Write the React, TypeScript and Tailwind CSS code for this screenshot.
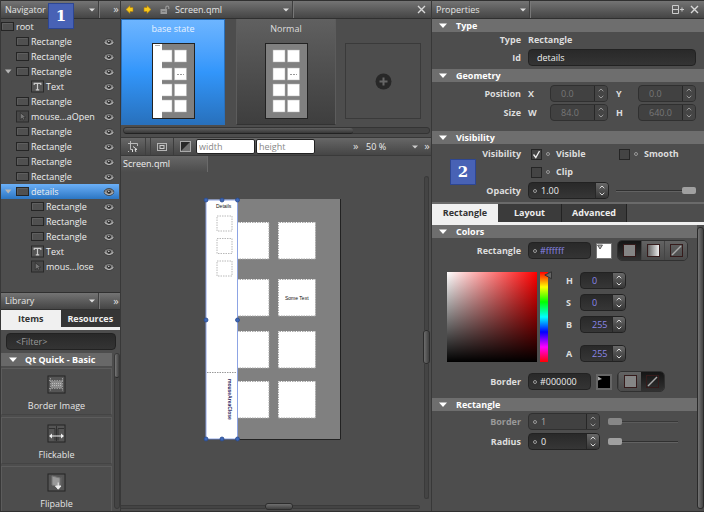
import React from "react";

const uiFont = "font-['Open_Sans','Noto_Sans',sans-serif]";
const bar = "bg-gradient-to-b from-[#747474] to-[#454545] border-t border-[#303030] border-b";
const field = "rounded-[4px] border border-[#222] bg-gradient-to-b from-[#292929] to-[#343434]";

function Down({ className = "" }: { className?: string }) {
  return (
    <svg aria-hidden="true" width="10" height="6" viewBox="0 0 10 6" className={className}>
      <path d="M1 0.5h8L5 5z" fill="currentColor" />
    </svg>
  );
}

function PaneSelect({ label, className }: { label: string; className: string }) {
  return (
    <div className={`grid h-full items-center border-r border-[#777] shadow-[-1px_0_0_#3f3f3f_inset] ${className}`}>
      <select aria-label={`${label} pane`} className="col-start-1 row-start-1 w-full appearance-none bg-transparent pl-1 text-[9px] text-[#e4e4e4] outline-none">
        <option>{label}</option>
      </select>
      <svg aria-hidden="true" width="6" height="4" viewBox="0 0 6 4" className="pointer-events-none col-start-1 row-start-1 mr-1 justify-self-end text-[#ddd]">
        <path d="M0 0.5h6L3 3.5z" fill="currentColor" />
      </svg>
    </div>
  );
}

function Eye() {
  return (
    <svg aria-hidden="true" width="12" height="10" viewBox="0 0 12 10">
      <ellipse cx="6" cy="5" rx="4.800" ry="3.400" fill="#858585" stroke="#303030" strokeWidth="0.800" />
      <path d="M1.5 5.3Q6 9.500 10.5 5.3" fill="none" stroke="#c4c4c4" strokeWidth="1" />
      <circle cx="6" cy="4.8" r="1.9" fill="#242424" />
      <circle cx="5.8" cy="4.4" r="0.8" fill="#c8c8c8" />
    </svg>
  );
}

function NodeIcon({ kind }: { kind: string }) {
  if (kind === "rect")
    return (
      <svg aria-hidden="true" width="13" height="11" viewBox="0 0 13 11">
        <rect x="0.5" y="1.5" width="12" height="8" fill="#505050" stroke="#252525" />
        <path d="M1.5 8.5v-6h10" stroke="#5f5f5f" fill="none" />
      </svg>
    );
  return (
    <svg aria-hidden="true" width="13" height="13" viewBox="0 0 13 13">
      <rect x="0.5" y="1" width="12" height="11" fill={kind === "text" ? "#555" : "#484848"} stroke="#2a2a2a" />
      {kind === "text" ? (
        <path d="M3.2 5V3.3h6.6V5M6.5 3.3v6.5M4.8 9.9h3.4" stroke="#ccc" strokeWidth="1.2" fill="none" />
      ) : (
        <path d="M4.3 2.7v7l2-1.6 1 2 1.4-.7-1-2 2-.3z" fill="#777" stroke="#242424" strokeWidth="0.6" />
      )}
    </svg>
  );
}

type Node = { name: string; kind: string; depth: number; open?: boolean; selected?: boolean };
const nodes: Node[] = [
  { name: "root", kind: "rect", depth: 0 },
  { name: "Rectangle", kind: "rect", depth: 1 },
  { name: "Rectangle", kind: "rect", depth: 1 },
  { name: "Rectangle", kind: "rect", depth: 1, open: true },
  { name: "Text", kind: "text", depth: 2 },
  { name: "Rectangle", kind: "rect", depth: 1 },
  { name: "mouse...aOpen", kind: "mouse", depth: 1 },
  { name: "Rectangle", kind: "rect", depth: 1 },
  { name: "Rectangle", kind: "rect", depth: 1 },
  { name: "Rectangle", kind: "rect", depth: 1 },
  { name: "Rectangle", kind: "rect", depth: 1 },
  { name: "details", kind: "rect", depth: 1, open: true, selected: true },
  { name: "Rectangle", kind: "rect", depth: 2 },
  { name: "Rectangle", kind: "rect", depth: 2 },
  { name: "Rectangle", kind: "rect", depth: 2 },
  { name: "Text", kind: "text", depth: 2 },
  { name: "mous...lose", kind: "mouse", depth: 2 },
];
const indents = ["pl-0", "pl-[3px]", "pl-[30px]"];

function Navigator() {
  return (
    <section className="relative flex h-[292px] shrink-0 flex-col">
      <header className={`flex h-[19px] items-center ${bar}`}>
        <PaneSelect label="Navigator" className="flex-1" />
        <button aria-label="More navigator options" className="w-5 pb-[2px] pl-3 text-[11px] leading-none text-[#ddd]">»</button>
      </header>
      <ul className="pr-px">
        {nodes.map((n, i) => (
          <li key={i} className={`flex h-[15px] items-center ${indents[n.depth]} ${n.selected ? "bg-gradient-to-b from-[#6bb0f8] to-[#2b76c3]" : ""}`}>
            {n.depth === 1 && (
              <span className="flex w-3 text-[#b5b5b5]">
                {n.open && <svg aria-hidden="true" width="8" height="5" viewBox="0 0 8 5"><path d="M1 .5h6.5L4.2 4.5z" fill="currentColor" /></svg>}
              </span>
            )}
            <NodeIcon kind={n.kind} />
            <span className="ml-[2px] flex-1 whitespace-nowrap text-[9px] leading-[15px] text-[#eee]">{n.name}</span>
            {n.depth > 0 && <button aria-label={`Toggle ${n.name}`} className="mr-[4px]"><Eye /></button>}
          </li>
        ))}
      </ul>
      <span className="absolute left-[47px] top-[3px] flex size-[26px] items-center justify-center border border-[#2d4692] bg-[#4862b5] font-['DejaVu_Serif',serif] text-[15px] font-bold text-white">1</span>
    </section>
  );
}

function LibIcon({ kind }: { kind: string }) {
  return (
    <svg aria-hidden="true" width="19" height="19" viewBox="0 0 19 19">
      <rect x="1" y="1" width="17" height="17" fill="#555" stroke="#242424" />
      {kind === "Border Image" && (
        <g>
          <rect x="4" y="6" width="11" height="7" fill="#8a8a8a" />
          <path d="M2 5.5h15M2 13.5h15M3.5 3v13M15.5 3v13" stroke="#999" strokeDasharray="1.5 1" fill="none" />
          <path d="M5 8.5h9M5 10.5h9" stroke="#bbb" strokeDasharray="1 1" />
        </g>
      )}
      {kind === "Flickable" && (
        <g>
          <path d="M2 4.5h6v12M17 4.5h-6v12M9.5 2v15" stroke="#303030" fill="none" />
          <path d="M3 12h13" stroke="#eee" />
          <path d="M2 12l3-2.5v5zM17 12l-3-2.5v5z" fill="#eee" />
        </g>
      )}
      {kind === "Flipable" && (
        <g>
          <path d="M5 3l8 2v9l-8-2z" fill="#999" stroke="#777" />
          <path d="M13 5l1.5-1v8L13 14z" fill="#666" />
          <path d="M11.2 9.5v4M8.5 13h5.5l-2.8 3.2z" stroke="#eee" strokeWidth="1" fill="#eee" />
        </g>
      )}
    </svg>
  );
}

function Library() {
  return (
    <section className="flex min-h-0 flex-1 flex-col">
      <header className={`flex h-[18px] shrink-0 items-center ${bar}`}>
        <PaneSelect label="Library" className="flex-1" />
        <button aria-label="More library options" className="w-5 pb-[2px] pl-3 text-[11px] leading-none text-[#ddd]">»</button>
      </header>
      <div role="tablist" className="flex h-5 shrink-0 border-b-[3px] border-[#f0f0f0] text-[9px] font-bold">
        <button role="tab" aria-selected="true" className="flex-1 bg-[#f0f0f0] text-[#333]">Items</button>
        <button role="tab" aria-selected="false" className="flex-1 bg-[#353535] text-[#eee]">Resources</button>
      </div>
      <input aria-label="Filter" placeholder="<Filter>" className={`ml-[5px] mr-[4px] my-[3px] h-[17px] shrink-0 px-[9px] text-[9px] text-white outline-none placeholder:text-[#999] ${field}`} />
      <div className="flex min-h-0 flex-1">
        <div className="min-w-0 flex-1 overflow-hidden">
          <button className="flex h-[13px] w-full items-center gap-[7px] bg-[#686868] pl-[7px] text-[9px] font-bold leading-[13px] text-white"><Down />Qt Quick - Basic</button>
          {["Border Image", "Flickable", "Flipable"].map((n) => (
            <button key={n} className="mt-[2px] flex h-[47px] w-full flex-col items-center border border-[#5c5c5c] border-b-[#444] pt-[6px] text-[9px] leading-[14px] text-[#e4e4e4]">
              <LibIcon kind={n} />
              <span className="mt-[5px]">{n}</span>
            </button>
          ))}
        </div>
        <div className="mb-[2px] ml-[2px] w-[6px] rounded-[3px] border border-[#383838] bg-[#444]">
          <div className="h-[24px] rounded-[2px] border-b border-[#292929] bg-gradient-to-r from-[#777] to-[#3e3e3e]" />
        </div>
      </div>
    </section>
  );
}

function Thumb({ base }: { base?: boolean }) {
  return (
    <svg aria-hidden="true" width="43" height="76" viewBox="0 0 43 76">
      <rect x="0.5" y="0.5" width="42" height="75" fill="#808080" stroke="#222" />
      {[7, 25, 41, 57].map((y) => (
        <g key={y} fill="#fff" stroke="#b0b0b0" strokeWidth="0.5">
          <rect x="8" y={y} width="12" height="12" />
          <rect x="22.5" y={y} width="12" height="12" />
        </g>
      ))}
      <path d="M25 31.5h7" stroke="#999" strokeDasharray="2 1" />
      {base && <rect x="1" y="1" width="9" height="74" fill="#fff" />}
      {base && <path d="M3 2.5h5" stroke="#aaa" />}
    </svg>
  );
}

function States() {
  return (
    <section className="flex h-[119px] shrink-0 flex-col border-b border-[#383838]">
      <div className="flex h-[106px]">
        <button className="flex w-[104px] flex-col items-center border border-[#2a70bb] bg-gradient-to-b from-[#6db5ff] via-[#3296fb] to-[#2871bd] pt-[2px] text-[9px] text-[#e8f2ff]">
          <span className="mb-[7px] leading-[14px]">base state</span>
          <Thumb base />
        </button>
        <button className="ml-[11px] flex w-[100px] flex-col items-center border-x border-[#5c5c5c] border-b border-b-[#333] bg-gradient-to-b from-[#606060] to-[#3e3e3e] pt-[3px] text-[9px] text-[#ddd]">
          <span className="mb-[7px] leading-[14px]">Normal</span>
          <Thumb />
        </button>
        <button aria-label="Add state" className="ml-[9px] mt-[24px] flex size-[76px] items-center justify-center border border-[#3a3a3a] bg-[#4d4d4d]">
          <svg aria-hidden="true" width="17" height="17" viewBox="0 0 17 17">
            <circle cx="8.5" cy="8.5" r="8" fill="#282828" />
            <path d="M8.5 4.5v8M4.5 8.5h8" stroke="#666" strokeWidth="2" />
          </svg>
        </button>
      </div>
      <div className="ml-[2px] mr-px mt-[2px] h-[7px] rounded-[3px] border border-[#343434] bg-[#444]">
        <div className="h-[6px] w-3/4 rounded-[3px] border-b border-[#222] bg-gradient-to-b from-[#606060] to-[#383838]" />
      </div>
    </section>
  );
}

function DocHeader() {
  return (
    <header className={`flex h-[19px] shrink-0 items-center ${bar}`}>
      <button aria-label="Back" className="ml-[5px]">
        <svg width="8" height="9" viewBox="0 0 8 9"><path d="M0 4.5L4 .5v2h3v4H4v2z" fill="#f7c91c" stroke="#b07c0a" strokeWidth="0.6" /></svg>
      </button>
      <button aria-label="Forward" className="ml-[9px]">
        <svg width="8" height="9" viewBox="0 0 8 9"><path d="M8 4.5L4 .5v2H1v4h3v2z" fill="#f7c91c" stroke="#b07c0a" strokeWidth="0.6" /></svg>
      </button>
      <button aria-label="Lock" className="ml-[9px]">
        <svg width="10" height="10" viewBox="0 0 10 10"><rect x="0.500" y="4" width="6.500" height="5" fill="#999" /><path d="M5.800 5V2.7a1.4 1.4 0 0 1 3 0V4" stroke="#999" fill="none" strokeWidth="1.2" /><path d="M2 6.5h3.500" stroke="#777" /></svg>
      </button>
      <PaneSelect label="Screen.qml" className="ml-[1px] w-[123px]" />
      <span className="flex-1" />
      <CloseButton label="Close document" />
    </header>
  );
}

function CloseButton({ label }: { label: string }) {
  return (
    <button aria-label={label} className="mr-[5px]">
      <svg width="9" height="9" viewBox="0 0 9 9"><path d="M1 1l7 7M8 1L1 8" stroke="#d8d8d8" strokeWidth="1.4" /></svg>
    </button>
  );
}

function Toolbar() {
  const size = "h-[15px] w-[59px] rounded-[2px] border border-[#222] bg-white px-[2px] text-[9px] text-[#333] outline-none placeholder:text-[#888]";
  return (
    <div className="flex h-[17px] shrink-0 items-center bg-gradient-to-b from-[#676767] to-[#454545]">
      <button aria-label="Snapping" className="flex h-full w-[25px] items-center justify-center border-r border-[#404040]">
        <svg width="12" height="12" viewBox="0 0 12 12"><path d="M3.5 0v8.5H6M1 2.5h9.5V5M1 10.5h1" stroke="#bbb" fill="none" /><path d="M6 5.500l4 3H8l1 2.500M5.500 9v2" stroke="#ddd" fill="none" /></svg>
      </button>
      <span className="h-full w-[5px] border-r border-[#404040]" />
      <button aria-label="Show boundaries" className="flex h-full w-[22px] items-center justify-center">
        <svg width="10" height="10" viewBox="0 0 10 10"><rect x="0.5" y="1.500" width="9" height="7" fill="none" stroke="#b5b5b5" /><rect x="3" y="3.500" width="4" height="3" fill="#555" stroke="#ccc" /></svg>
      </button>
      <button aria-label="Show contrast" className="flex h-full w-[23px] items-center justify-center border-l border-[#3c3c3c]">
        <svg width="11" height="11" viewBox="0 0 11 11"><rect x="0.5" y="0.5" width="10" height="10" fill="#282828" stroke="#aaa" /><path d="M10 1v9H1z" fill="#707070" /></svg>
      </button>
      <input aria-label="Width" placeholder="width" className={size} />
      <input aria-label="Height" placeholder="height" className={`ml-px ${size}`} />
      <span className="flex-1" />
      <button aria-label="More tools" className="w-[13px] pb-[2px] text-left text-[11px] leading-none text-[#ddd]">»</button>
      <div className="grid w-[57px] items-center">
        <select aria-label="Zoom" className="col-start-1 row-start-1 w-full appearance-none bg-transparent text-[9px] text-[#eee] outline-none"><option>50 %</option></select>
        <svg aria-hidden="true" width="6" height="4" viewBox="0 0 6 4" className="pointer-events-none col-start-1 row-start-1 mr-[5px] justify-self-end text-[#ccc]"><path d="M0 .5h6L3 3.500z" fill="currentColor" /></svg>
      </div>
      <button aria-label="More zoom options" className="w-2 pb-[2px] text-[11px] leading-none text-[#ddd]">»</button>
    </div>
  );
}

function Artboard() {
  return (
    <svg role="img" aria-label="Screen design" width="142" height="247" viewBox="-3 -3 142 247" fontFamily="'Liberation Sans', sans-serif">
      <rect x="0" y="0" width="135" height="241" fill="#808080" />
      <path d="M0 240.500h134.500V0" stroke="#222" fill="none" />
      {[23, 80, 132, 182].map((y) => (
        <g key={y}>
          <path d={`M26 ${y}h37v37H26zM72 ${y}h37.500v37H72z`} fill="#fff" />
          <path d={`M31 ${y + 0.5}h32v36.500M110 ${y + 0.5}H72.500v36.500M72.500 ${y + 37}h37V${y}M31 ${y + 37}h32`} stroke="#a8a8a8" strokeDasharray="1.500 1" fill="none" />
        </g>
      ))}
      <rect x="0" y="1" width="31.500" height="239" fill="#fff" stroke="#8da4e4" />
      {[17, 39.500, 62].map((y) => (
        <rect key={y} x="11" y={y} width="15" height="15" fill="none" stroke="#b8b8b8" strokeDasharray="1.500 1" />
      ))}
      <path d="M1 173.500h30" stroke="#999" strokeDasharray="1.500 1" />
      <text x="10" y="9" fontSize="5" fill="#111">Details</text>
      <text x="79" y="101" fontSize="5" fill="#111">Some Text</text>
      <text transform="translate(21.500 180) rotate(90)" fontSize="5" fontWeight="bold" fill="#26265e">mouseAreaClose</text>
      {[[0, 1], [16, 1], [31.500, 1], [0, 121], [31.500, 121], [0, 240], [16, 240], [31.500, 240]].map(([x, y]) => (
        <circle key={`${x}-${y}`} cx={x} cy={y} r="2" fill="#3c68b8" stroke="#29498c" strokeWidth="0.800" />
      ))}
    </svg>
  );
}

function Canvas() {
  return (
    <section className="flex min-h-0 flex-1 flex-col border-t border-[#3a3a3a]">
      <div className="flex min-h-0 flex-1">
        <div className="min-w-0 flex-1">
          <button className="block h-4 w-[87px] border-r border-[#6a6a6a] bg-gradient-to-b from-[#676767] to-[#4d4d4d] pl-[2px] text-left text-[9px] leading-4 text-[#eee]">Screen.qml</button>
          <div className="flex justify-center pl-1 pt-[24px]"><Artboard /></div>
        </div>
        <div className="mb-1 mr-[1px] mt-5 flex w-[7px] flex-col items-center">
          <div className="w-[5px] flex-[8] rounded-t-[3px] border border-b-0 border-[#3a3a3a] bg-[#444]" />
          <div className="h-[34px] w-full rounded-[3px] border border-[#2c2c2c] bg-gradient-to-r from-[#6d6d6d] to-[#404040]" />
          <div className="w-[5px] flex-[7] rounded-b-[3px] border border-t-0 border-[#3a3a3a] bg-[#444]" />
        </div>
      </div>
      <div className="mb-px mr-[11px] flex h-[7px] shrink-0 items-center">
        <div className="h-[4px] flex-[8] border-y border-[#3a3a3a] bg-[#444]" />
        <div className="h-full w-[28px] rounded-[3px] border border-[#2c2c2c] bg-gradient-to-b from-[#707070] to-[#404040]" />
        <div className="h-[4px] flex-[7] rounded-r-[3px] border border-l-0 border-[#3a3a3a] bg-[#444]" />
      </div>
    </section>
  );
}

function SectionHead({ children }: { children: React.ReactNode }) {
  return (
    <h2>
      <button className="flex h-[13px] w-full items-center gap-2 bg-[#6e6e6e] pl-[6px] text-[9px] font-bold leading-[13px] text-white"><Down />{children}</button>
    </h2>
  );
}

function Row({ label, id, dim, className, children }: { label: string; id?: string; dim?: boolean; className: string; children: React.ReactNode }) {
  const text = `w-[89px] shrink-0 text-right font-bold ${dim ? "text-[#999]" : "text-[#ddd]"}`;
  return (
    <div className={`flex items-center text-[9px] ${className}`}>
      {id ? <label htmlFor={id} className={text}>{label}</label> : <span className={text}>{label}</span>}
      <div className="ml-[7px] flex flex-1 items-center">{children}</div>
    </div>
  );
}

function Dot() {
  return <span aria-hidden="true" className="mx-[2px] size-[4px] shrink-0 rounded-full border border-[#999]" />;
}

function Spin({ id, value, label, width, pad = "pl-[10px]", color = "text-[#eee]", dot, dim }: { id: string; value: string; label?: string; width: string; pad?: string; color?: string; dot?: boolean; dim?: boolean }) {
  return (
    <div className={`flex h-[17px] shrink-0 items-center overflow-hidden rounded-[4px] border ${dim ? "border-[#303030] bg-[#414141]" : "border-[#222] bg-gradient-to-b from-[#292929] to-[#363636]"} ${width}`}>
      {dot && <span className="pl-1"><span aria-hidden="true" className="block size-1 rounded-full border border-[#999]" /></span>}
      <input id={id} aria-label={label} defaultValue={value} disabled={dim} className={`min-w-0 flex-1 bg-transparent text-[9px] outline-none ${pad} ${color}`} />
      <span className={`flex h-full w-[13px] flex-col items-center justify-around border-l border-[#272727] py-px ${dim ? "bg-[#454545] text-[#999]" : "bg-gradient-to-b from-[#686868] to-[#363636] text-[#ddd]"}`}>
        <button aria-label={`Increase ${id}`}><svg className="block" width="6" height="4" viewBox="0 0 6 4"><path d="M.7 3.200L3 1l2.300 2.200" fill="none" stroke="currentColor" /></svg></button>
        <button aria-label={`Decrease ${id}`}><svg className="block" width="6" height="4" viewBox="0 0 6 4"><path d="M.7.8L3 3 5.300.8" fill="none" stroke="currentColor" /></svg></button>
      </span>
    </div>
  );
}

function Check({ id, label, checked }: { id: string; label: string; checked?: boolean }) {
  return (
    <span className="flex items-center font-bold text-[#ddd]">
      <span className="grid size-[11px] items-center justify-items-center">
        <input id={id} type="checkbox" defaultChecked={checked} className="peer col-start-1 row-start-1 size-[11px] appearance-none border border-[#252525] bg-[#444]" />
        <svg aria-hidden="true" className="pointer-events-none invisible col-start-1 row-start-1 peer-checked:visible" width="9" height="9" viewBox="0 0 9 9"><path d="M1.500 4.500l2.300 3L7.500 1" fill="none" stroke="#f0f0f0" strokeWidth="1.300" /></svg>
      </span>
      <span className="ml-[2px] flex"><Dot /></span>
      <label htmlFor={id} className="ml-1">{label}</label>
    </span>
  );
}

function Slider({ label, value, className }: { label: string; value: number; className: string }) {
  return (
    <input
      type="range"
      aria-label={label}
      defaultValue={value}
      className={`h-[9px] appearance-none bg-transparent [&::-webkit-slider-runnable-track]:h-[2px] [&::-webkit-slider-runnable-track]:border-t [&::-webkit-slider-runnable-track]:border-[#303030] [&::-webkit-slider-runnable-track]:bg-[#626262] [&::-webkit-slider-thumb]:-mt-[4px] [&::-webkit-slider-thumb]:h-[7px] [&::-webkit-slider-thumb]:w-[14px] [&::-webkit-slider-thumb]:appearance-none [&::-webkit-slider-thumb]:rounded-[2px] [&::-webkit-slider-thumb]:bg-[#a0a0a0] ${className}`}
    />
  );
}

function HexField({ id, value, color }: { id: string; value: string; color: string }) {
  return (
    <div className={`flex h-[17px] w-[63px] shrink-0 items-center pl-[2px] ${field}`}>
      <span className="flex"><Dot /></span>
      <input id={id} defaultValue={value} className={`min-w-0 flex-1 bg-transparent pl-px text-[9px] outline-none ${color}`} />
    </div>
  );
}

function Fill({ kind }: { kind: "solid" | "gradient" | "none" }) {
  const inner = kind === "solid" ? "bg-[#858585]" : kind === "gradient" ? "bg-gradient-to-r from-[#666] to-[#eee]" : "bg-transparent";
  return (
    <span className={`block size-[13px] border border-[#351b1b] ${inner}`}>
      {kind === "none" && <svg aria-hidden="true" className="block" width="11" height="11" viewBox="0 0 11 11"><path d="M1 10l9-9" stroke="#aaa" strokeWidth="1.500" /></svg>}
    </span>
  );
}

function FillGroup({ kinds, active }: { kinds: ("solid" | "gradient" | "none")[]; active: string }) {
  return (
    <div className="ml-[5px] flex h-[21px] overflow-hidden rounded-[5px] border border-[#303030]">
      {kinds.map((k) => (
        <button key={k} aria-label={`${k} fill`} aria-pressed={k === active} className={`flex w-[23px] items-center justify-center ${k === active ? "bg-gradient-to-b from-[#151515] to-[#323232]" : "border-l border-[#444] bg-gradient-to-b from-[#636363] to-[#4a4a4a]"}`}>
          <Fill kind={k} />
        </button>
      ))}
    </div>
  );
}

function ColorPicker() {
  const values = [["H", "0", "mt-px"], ["S", "0", "mt-[5px]"], ["B", "255", "mt-[5px]"], ["A", "255", "mt-[12px]"]];
  return (
    <div className="flex pl-[15px] pt-[10px]">
      <div className="mt-px size-[90px] bg-[linear-gradient(to_top,#000,transparent),linear-gradient(to_right,#fff,#f00)]" />
      <div className="ml-[3px] mt-px h-[90px] w-2 bg-[linear-gradient(to_bottom,#f00,#ff0,#0f0,#0ff,#00f,#f0f,#f00)]" />
      <svg aria-hidden="true" width="9" height="9" viewBox="0 0 9 9" className="-ml-[4px]"><path d="M.8 4L7.500.8v7z" fill="#666" stroke="#333" /></svg>
      <div className="ml-[13px] text-[9px]">
        {values.map(([k, v, gap]) => (
          <div key={k} className={`flex items-center ${gap}`}>
            <label htmlFor={`hsb-${k}`} className="w-[14px] font-bold text-[#ddd]">{k}</label>
            <Spin id={`hsb-${k}`} value={v} width="w-[46px]" pad="pl-[11px]" color="text-[#8a86e8]" />
          </div>
        ))}
      </div>
    </div>
  );
}

function Properties() {
  return (
    <aside className="relative flex w-[273px] shrink-0 flex-col border-l border-[#383838]">
      <header className={`flex h-[19px] shrink-0 items-center ${bar}`}>
        <PaneSelect label="Properties" className="w-[99px]" />
        <span className="flex-1" />
        <button aria-label="Split" className="mr-[6px]">
          <svg width="12" height="9" viewBox="0 0 12 9"><path d="M.500.500h6v8h-6zM.500 4.500h6M8 4.500h4M10 2.500v4" stroke="#ccc" fill="none" /></svg>
        </button>
        <CloseButton label="Close properties" />
      </header>
      <SectionHead>Type</SectionHead>
      <Row label="Type" className="mt-px h-[13px]"><span className="font-bold text-[#ddd]">Rectangle</span></Row>
      <Row label="Id" id="item-id" className="mb-[3px] mt-[3px] h-[17px]">
        <input id="item-id" defaultValue="details" className={`mr-2 h-[17px] min-w-0 flex-1 px-2 text-[9px] text-[#eee] outline-none ${field}`} />
      </Row>
      <SectionHead>Geometry</SectionHead>
      {[["Position", "X", "0.0", "Y", "0.0", "mt-[3px]"], ["Size", "W", "84.0", "H", "640.0", "mt-[2px]"]].map(([l, a, av, b, bv, gap]) => (
        <Row key={l} label={l} className={`h-[17px] ${gap}`}>
          <label htmlFor={`geo-${a}`} className="w-[22px] font-bold text-[#ddd]">{a}</label>
          <Spin id={`geo-${a}`} value={av} width="w-[58px]" color="text-[#777]" dim />
          <label htmlFor={`geo-${b}`} className="ml-[8px] w-[22px] font-bold text-[#ddd]">{b}</label>
          <Spin id={`geo-${b}`} value={bv} width="w-[58px]" color="text-[#777]" dim />
        </Row>
      ))}
      <div className="mt-[10px]"><SectionHead>Visibility</SectionHead></div>
      <Row label="Visibility" className="mt-[3px] h-[14px]">
        <span className="ml-[3px] w-[88px]"><Check id="visible" label="Visible" checked /></span>
        <Check id="smooth" label="Smooth" />
      </Row>
      <Row label="" className="mt-1 h-[14px]"><span className="ml-[3px]"><Check id="clip" label="Clip" /></span></Row>
      <Row label="Opacity" id="opacity" className="mb-[3px] mt-[3px] h-[17px]">
        <Spin id="opacity" value="1.00" width="w-[81px]" pad="pl-1" dot />
        <Slider label="Opacity level" value={100} className="ml-[7px] w-[80px]" />
      </Row>
      <div role="tablist" className="flex h-[23px] shrink-0 border-b-[3px] border-t-2 border-b-[#f0f0f0] border-t-[#6a6a6a] text-[9px] font-bold text-[#eee]">
        <button role="tab" aria-selected="true" className="w-[66px] bg-[#f0f0f0] text-[#333]">Rectangle</button>
        <button role="tab" aria-selected="false" className="w-[64px] border-r border-[#222] bg-[#3b3b3b]">Layout</button>
        <button role="tab" aria-selected="false" className="w-[65px] border-r border-[#222] bg-[#3b3b3b]">Advanced</button>
      </div>
      <div className="flex min-h-0 flex-1">
        <div className="min-w-0 flex-1">
          <SectionHead>Colors</SectionHead>
          <Row label="Rectangle" id="fill" className="mt-[2px] h-[21px]">
            <HexField id="fill" value="#ffffff" color="text-[#8a86e8]" />
            <button aria-label="Pick fill colour" className="ml-[5px] flex size-4 items-start border border-[#777] bg-white">
              <svg className="block" width="6" height="6" viewBox="0 0 6 6"><path d="M.500 1h5L3 5z" fill="#aaa" stroke="#444" strokeWidth=".8" /></svg>
            </button>
            <FillGroup kinds={["solid", "gradient", "none"]} active="solid" />
          </Row>
          <ColorPicker />
          <Row label="Border" id="stroke" className="mt-[9px] h-[21px]">
            <HexField id="stroke" value="#000000" color="text-[#eee]" />
            <button aria-label="Pick border colour" className="ml-[5px] flex size-4 items-start border-2 border-[#666] bg-black">
              <svg className="block" width="5" height="6" viewBox="0 0 5 6"><path d="M0 .500v4L4 3z" fill="#aaa" /></svg>
            </button>
            <FillGroup kinds={["solid", "none"]} active="none" />
          </Row>
          <div className="mt-[6px]"><SectionHead>Rectangle</SectionHead></div>
          <Row label="Border" id="border-width" dim className="mt-[2px] h-[17px]">
            <Spin id="border-width" value="1" width="w-[72px]" pad="pl-1" color="text-[#aaa]" dot dim />
            <Slider label="Border width level" value={0} className="ml-[8px] w-[70px] opacity-70" />
          </Row>
          <Row label="Radius" id="radius" className="mt-[3px] h-[17px]">
            <Spin id="radius" value="0" width="w-[72px]" pad="pl-1" dot />
            <Slider label="Radius level" value={0} className="ml-[8px] w-[70px]" />
          </Row>
        </div>
        <div className="mb-[2px] mt-[2px] w-[7px] rounded-[3px] border border-[#2a2a2a] bg-gradient-to-r from-[#747474] to-[#444]" />
      </div>
      <span className="absolute left-[18px] top-[159px] flex size-[26px] items-center justify-center border border-[#2d4692] bg-[#4862b5] font-['DejaVu_Serif',serif] text-[15px] font-bold text-white">2</span>
    </aside>
  );
}

export default function App() {
  return (
    <div className={`flex h-screen overflow-hidden border-b border-[#303030] bg-[#4d4d4d] ${uiFont}`}>
      <aside className="flex w-[121px] shrink-0 flex-col border-l border-r border-[#383838]">
        <Navigator />
        <Library />
      </aside>
      <main className="flex min-w-0 flex-1 flex-col">
        <DocHeader />
        <States />
        <Toolbar />
        <Canvas />
      </main>
      <Properties />
    </div>
  );
}
